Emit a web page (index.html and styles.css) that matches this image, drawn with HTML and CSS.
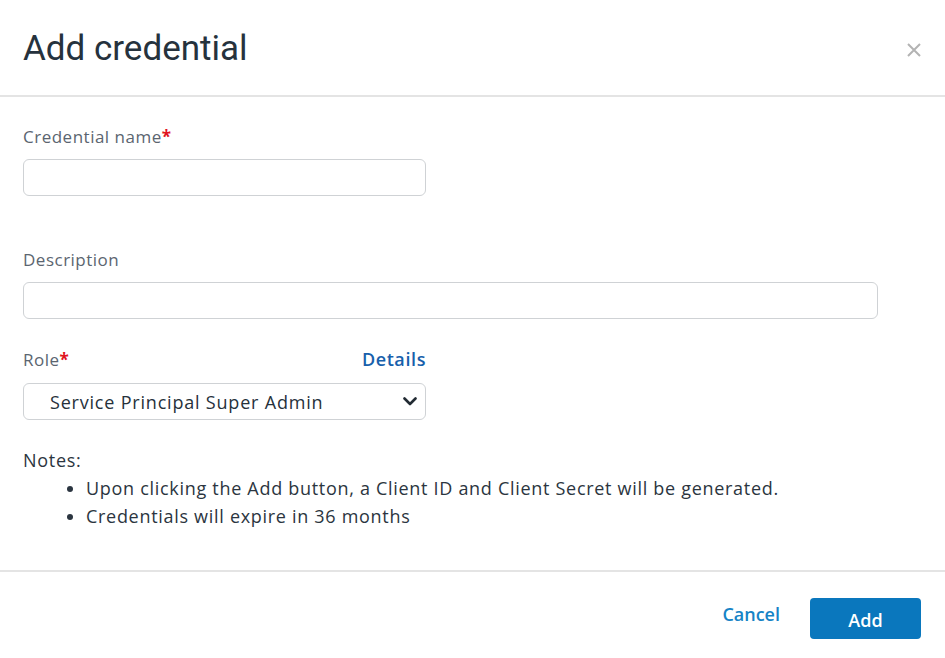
FILE: index.html
```html
<!DOCTYPE html>
<html lang="en">
  <head>
    <meta charset="utf-8">
    <meta name="viewport" content="width=device-width,initial-scale=1.0">
    <title>Add credential</title>
    <link rel="stylesheet" href="styles.css">
  </head>
  <body>
    <div class="modal">
      <div class="modal-header">
        <h1 class="modal-title">Add credential</h1>
        <button class="close-button" aria-label="Close">
          <svg width="16" height="16" viewBox="0 0 16 16">
            <path d="M2 2 L14 14 M14 2 L2 14" stroke="#b3b3b3" stroke-width="2" fill="none"/>
          </svg>
        </button>
      </div>

      <div class="modal-body">
        <div class="field field-name">
          <label class="field-label">Credential name<span class="required">*</span></label>
          <input class="text-input short" type="text">
        </div>

        <div class="field field-desc">
          <label class="field-label">Description</label>
          <input class="text-input wide" type="text">
        </div>

        <div class="field field-role">
          <div class="label-row">
            <label class="field-label">Role<span class="required">*</span></label>
            <a class="details-link" href="#">Details</a>
          </div>
          <div class="select-box">
            <span class="select-value">Service Principal Super Admin</span>
            <svg class="chevron" width="14" height="9" viewBox="0 0 14 9">
              <path d="M1.5 1.5 L7 7 L12.5 1.5" stroke="#222b33" stroke-width="2.6" fill="none" stroke-linecap="round" stroke-linejoin="round"/>
            </svg>
          </div>
        </div>

        <div class="notes">
          <div class="notes-title">Notes:</div>
          <ul class="notes-list">
            <li>Upon clicking the Add button, a Client ID and Client Secret will be generated.</li>
            <li>Credentials will expire in 36 months</li>
          </ul>
        </div>
      </div>

      <div class="modal-footer">
        <a class="cancel-link" href="#">Cancel</a>
        <button class="primary-button">Add</button>
      </div>
    </div>
  </body>
</html>
```

FILE: styles.css
```css
body {
  margin: 0;
  padding: 0;
  background: #fff;
  font-family: "Open Sans", Roboto, sans-serif;
  color: #2b3540;
}

.modal {
  width: 945px;
  height: 658px;
  display: flex;
  flex-direction: column;
}

/* Header */
.modal-header {
  height: 95px;
  display: flex;
  align-items: center;
  justify-content: space-between;
  padding: 0 23px 0 23px;
  border-bottom: 2px solid #e4e4e4;
}

.modal-title {
  margin: 2px 0 0 0;
  font-family: Roboto, "Liberation Sans", sans-serif;
  font-size: 35px;
  font-weight: 400;
  color: #26323d;
}

.close-button {
  border: none;
  background: transparent;
  padding: 0;
  margin-top: 4px;
  cursor: pointer;
  display: flex;
}

/* Body */
.modal-body {
  padding: 30px 23px 0 23px;
  flex: 1;
}

.field {
  display: flex;
  flex-direction: column;
}

.field-desc {
  margin-top: 54px;
}

.field-role {
  margin-top: 30px;
}

.field-label {
  font-size: 17px;
  line-height: 20px;
  color: #5b6570;
  letter-spacing: 0.5px;
  margin-bottom: 12px;
}

.required {
  color: #e0141e;
  font-weight: 700;
}

.label-row {
  display: flex;
  justify-content: space-between;
  align-items: baseline;
  width: 403px;
  margin-bottom: 1px;
}

.details-link {
  font-size: 18px;
  line-height: 20px;
  color: #1760ab;
  text-decoration: none;
  font-weight: 600;
  letter-spacing: 0.6px;
}

.text-input {
  height: 37px;
  box-sizing: border-box;
  border: 1.5px solid #cfd2d5;
  border-radius: 6px;
  background: #fff;
  margin: 0;
  outline: none;
}

.text-input.short {
  width: 403px;
}

.text-input.wide {
  width: 855px;
}

.select-box {
  width: 403px;
  height: 37px;
  box-sizing: border-box;
  border: 1.5px solid #cfd2d5;
  border-radius: 6px;
  display: flex;
  align-items: center;
  justify-content: space-between;
  padding: 0 8px 0 26px;
}

.select-value {
  font-size: 18px;
  color: #26313b;
  letter-spacing: 0.8px;
}

/* Notes */
.notes {
  margin-top: 26px;
  font-size: 18px;
  line-height: 28px;
  color: #2b3540;
  letter-spacing: 0.7px;
}

.notes-list {
  margin: 0;
  padding-left: 63px;
}

/* Footer */
.modal-footer {
  height: 88px;
  border-top: 2px solid #e4e4e4;
  display: flex;
  justify-content: flex-end;
  align-items: center;
  padding: 6px 24px 0 0;
  box-sizing: border-box;
  gap: 30px;
}

.cancel-link {
  font-size: 18px;
  color: #1683c6;
  font-weight: 600;
  text-decoration: none;
  margin-bottom: 8px;
}

.primary-button {
  width: 111px;
  height: 41px;
  border: none;
  border-radius: 4px;
  background: #0a77bd;
  color: #fff;
  font-family: inherit;
  font-size: 18px;
  font-weight: 600;
  padding-top: 4px;
  cursor: pointer;
}
```
